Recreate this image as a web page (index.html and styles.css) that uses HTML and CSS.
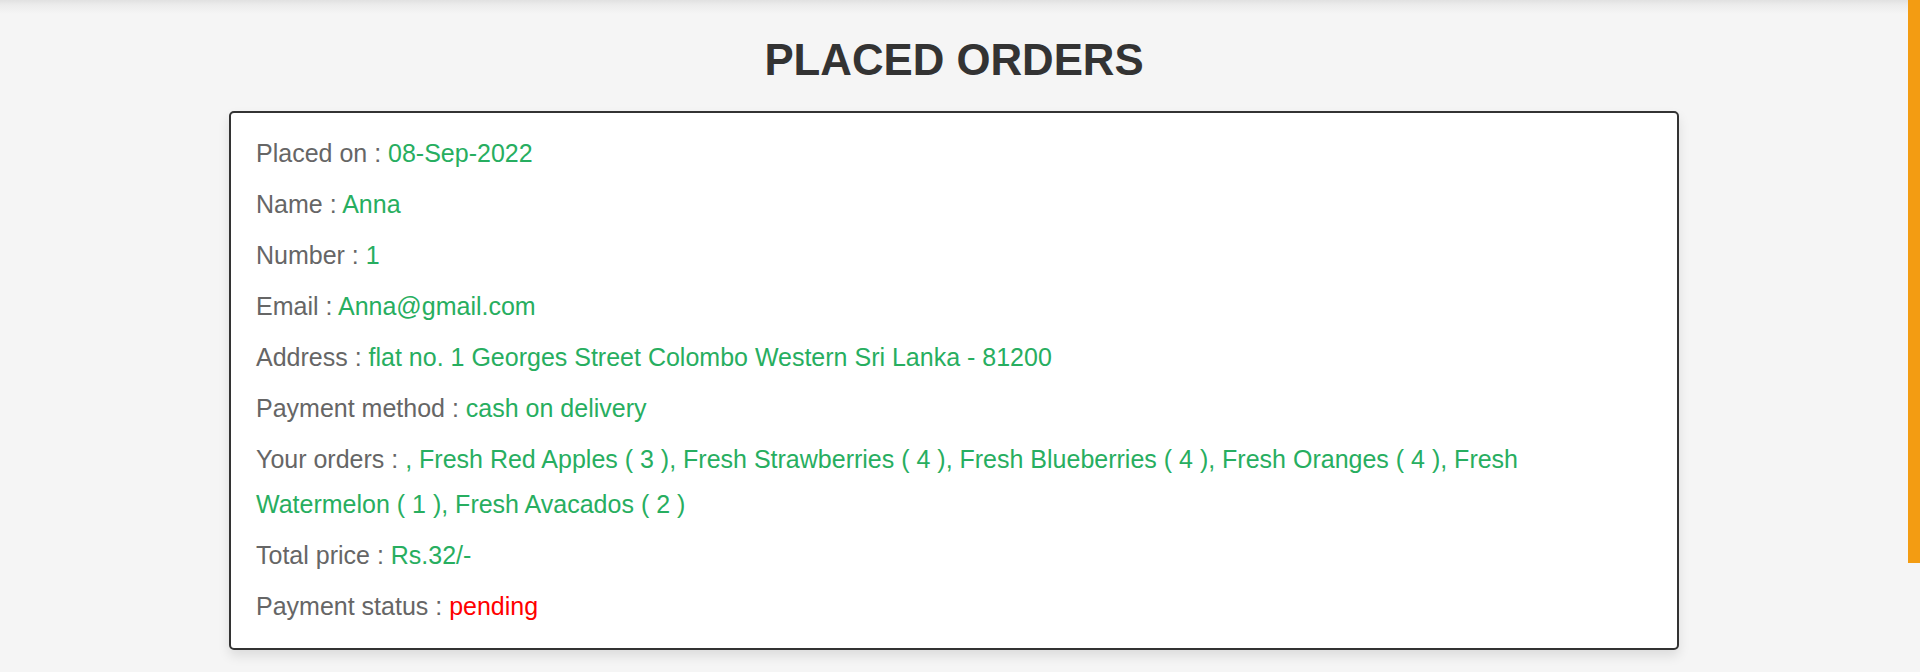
FILE: index.html
```html
<!DOCTYPE html>
<html lang="en">
<head>
<meta charset="utf-8">
<title>Placed Orders</title>
<link rel="stylesheet" href="styles.css">
</head>
<body>
<div class="page">
  <section class="placed-orders">
    <h1 class="title">placed orders</h1>
    <div class="box-container">
      <div class="box">
        <p>Placed on : <span>08-Sep-2022</span></p>
        <p>Name : <span>Anna</span></p>
        <p>Number : <span>1</span></p>
        <p>Email : <span>Anna@gmail.com</span></p>
        <p>Address : <span>flat no. 1 Georges Street Colombo Western Sri Lanka - 81200</span></p>
        <p>Payment method : <span>cash on delivery</span></p>
        <p>Your orders : <span>, Fresh Red Apples ( 3 ), Fresh Strawberries ( 4 ), Fresh Blueberries ( 4 ), Fresh Oranges ( 4 ), Fresh Watermelon ( 1 ), Fresh Avacados ( 2 )</span></p>
        <p>Total price : <span>Rs.32/-</span></p>
        <p>Payment status : <span class="pending">pending</span></p>
      </div>
    </div>
  </section>
</div>
<div class="scroll-thumb"></div>
</body>
</html>
```
FILE: styles.css
```css
html, body {
  margin: 0;
  padding: 0;
}
body {
  background: #f5f5f5;
  font-family: "Liberation Sans", Arial, sans-serif;
}
.page {
  padding-right: 12px;
  min-height: 672px;
  box-sizing: border-box;
  background: linear-gradient(to bottom, #e1e1e1 0, #ececec 5px, #f5f5f5 14px) no-repeat;
}
.placed-orders {
  padding-top: 34px;
}
.title {
  margin: 0 0 24px;
  text-align: center;
  text-transform: uppercase;
  font-size: 43.75px;
  line-height: 52.5px;
  font-weight: bold;
  color: #333;
}
.box-container {
  display: flex;
  justify-content: center;
}
.box {
  width: 1450px;
  box-sizing: border-box;
  background: #fff;
  border: 2px solid #333;
  border-radius: 5px;
  box-shadow: 0 6px 12px rgba(0, 0, 0, 0.1);
  padding: 15px 25px 16px;
}
.box p {
  margin: 0;
  padding: 3px 0;
  font-size: 25px;
  line-height: 45px;
  color: #666;
}
.box p span {
  color: #27ae60;
}
.box p span.pending {
  color: #ff0000;
}
.scroll-thumb {
  position: fixed;
  top: 0;
  right: 0;
  width: 12px;
  height: 563px;
  background: #f39c12;
}
```
